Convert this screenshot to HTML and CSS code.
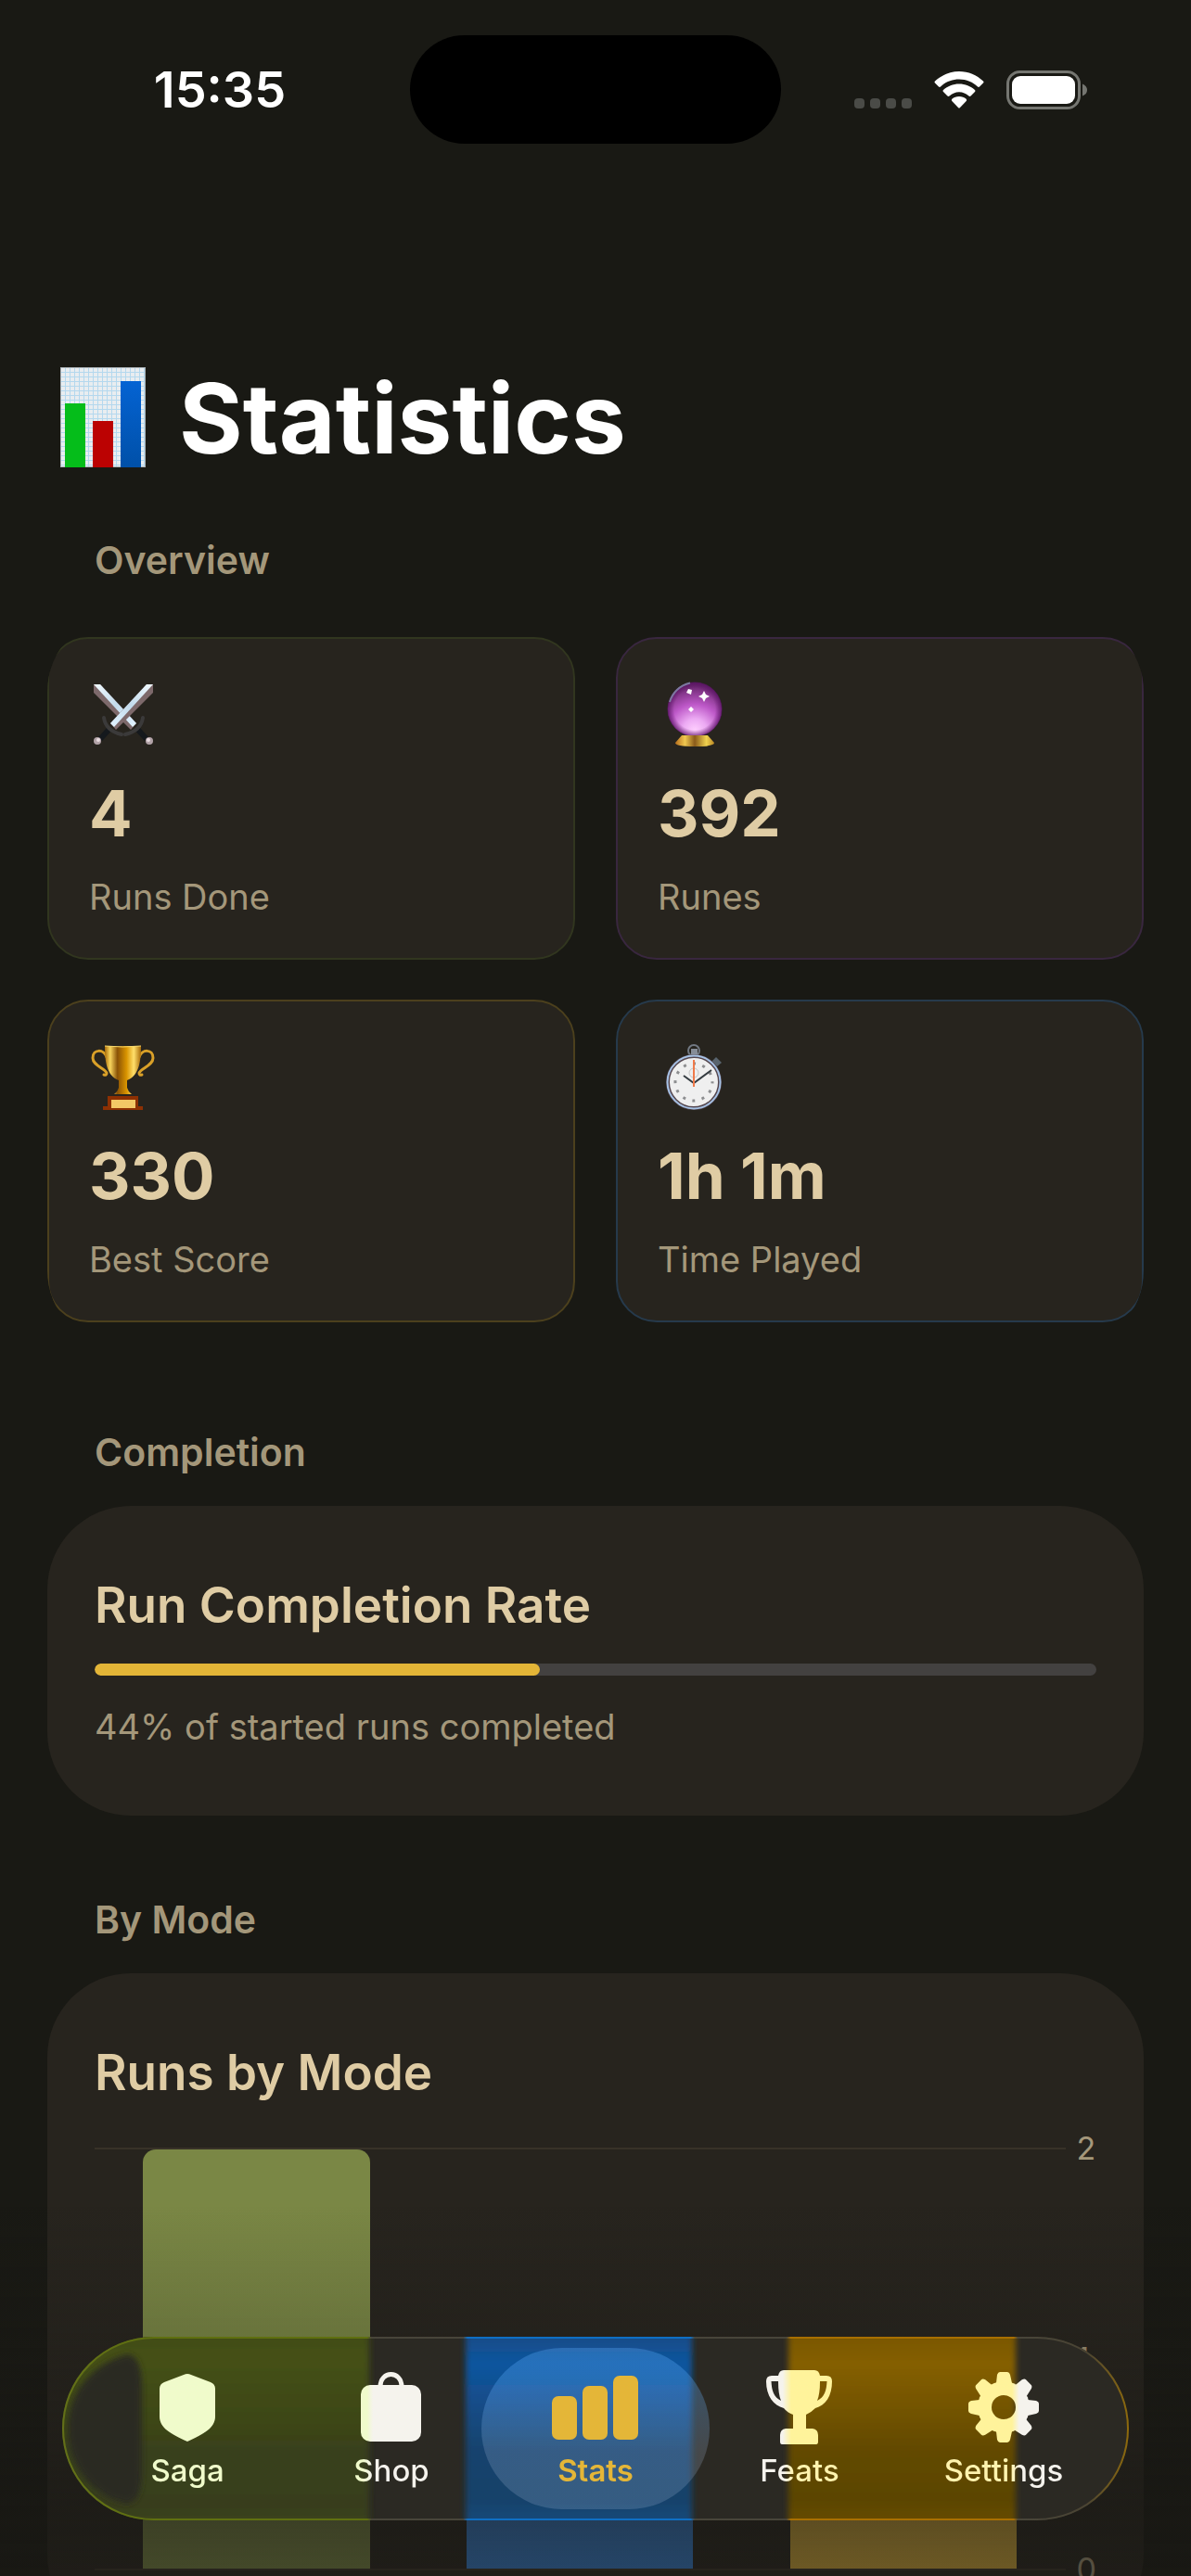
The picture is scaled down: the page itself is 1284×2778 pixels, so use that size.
FILE: index.html
```html
<!DOCTYPE html>
<html lang="en">
<head>
    <meta charset="UTF-8">
    <meta name="viewport" content="width=device-width, initial-scale=1">
    <title>Statistics</title>
    <link rel="stylesheet" href="styles.css">
</head>
<body>
<div class="app">
    <!-- Status bar -->
    <header class="status">
        <time class="status-time">15:35</time>
        <div class="island"></div>
        <div class="status-icons">
            <svg class="signal" viewBox="0 0 62 12" fill="#4a4b47">
                <rect x="0" y="0" width="11" height="11" rx="4"/>
                <rect x="17" y="0" width="11" height="11" rx="4"/>
                <rect x="34" y="0" width="11" height="11" rx="4"/>
                <rect x="51" y="0" width="11" height="11" rx="4"/>
            </svg>
            <svg class="wifi" viewBox="0 0 54 40" fill="#fff">
                <path d="M27 0C17 0 8 4 1 10.500Q0 11.500 1 12.500L5 16.500Q6 17.300 7 16.500C12 11.500 19 8.500 27 8.500S42 11.500 47 16.500Q48 17.300 49 16.500L53 12.500Q54 11.500 53 10.500C46 4 37 0 27 0Z"/>
                <path d="M27 13.500C20.500 13.500 14.500 16 10 20Q9 21 10 22L14.500 26.500Q15.500 27.300 16.500 26.500C19.500 24 23 22.300 27 22.300S34.500 24 37.500 26.500Q38.500 27.300 39.500 26.500L44 22Q45 21 44 20C39.500 16 33.500 13.500 27 13.500Z"/>
                <path d="M27 27C24 27 21.500 28 19.300 29.800Q18.300 31 19.300 32L26 39Q27 40 28 39L34.700 32Q35.700 31 34.700 29.800C32.500 28 30 27 27 27Z"/>
            </svg>
            <svg class="battery" viewBox="0 0 88 42">
                <rect x="1.500" y="1.500" width="77" height="39" rx="13" fill="none" stroke="#757671" stroke-width="3"/>
                <rect x="6" y="6" width="68" height="30" rx="9" fill="#fff"/>
                <path d="M82 14.500Q87 16.500 87 21T82 27.500Z" fill="#757671"/>
            </svg>
        </div>
    </header>

    <main class="content">
        <h1 class="title">
            <svg class="title-icon" viewBox="0 0 92 108">
                <defs>
                    <pattern id="paper" width="5" height="5" patternUnits="userSpaceOnUse">
                        <rect width="5" height="5" fill="#e9edf0"/>
                        <path d="M0 .5H5M.5 0V5" stroke="#b4d8ee" stroke-width="1"/>
                    </pattern>
                    <linearGradient id="blueBar" x1="0" y1="0" x2="0" y2="1">
                        <stop offset="0" stop-color="#0463d3"/><stop offset="1" stop-color="#0050a8"/>
                    </linearGradient>
                </defs>
                <rect width="92" height="108" fill="url(#paper)"/>
                <rect x=".5" y=".5" width="91" height="107" fill="none" stroke="#a9b0b5"/>
                <rect x="5" y="39" width="22" height="69" fill="#05bd1a"/>
                <rect x="35" y="58" width="22" height="50" fill="#bb0202"/>
                <rect x="65" y="15" width="22" height="93" fill="url(#blueBar)"/>
            </svg>
            Statistics
        </h1>

        <h2 class="section-label first">Overview</h2>
        <section class="overview">
            <div class="stat stat-green">
                <svg class="stat-icon" viewBox="0 0 72 72">
                    <defs>
                        <linearGradient id="blade" x1="0" y1="0" x2="1" y2="1">
                            <stop offset="0" stop-color="#f2faff"/><stop offset=".5" stop-color="#c3dbec"/><stop offset="1" stop-color="#e2f3ff"/>
                        </linearGradient>
                    </defs>
                    <g id="sword">
                        <path d="M5 3L12 3L51 45L45 52L5 12Z" fill="#7d696b"/>
                        <path d="M5 3L12 3L51 45L47 49Z" fill="url(#blade)"/>
                        <path d="M51 50L62 62" stroke="#15191d" stroke-width="6"/>
                        <path d="M58 39Q56 53 39 57" fill="none" stroke="#3b3a3a" stroke-width="4" stroke-linecap="round"/>
                        <circle cx="65" cy="64" r="4" fill="#b1a2a7"/>
                        <circle cx="64" cy="63" r="2" fill="#e9dce0"/>
                    </g>
                    <use href="#sword" transform="translate(74 0) scale(-1 1)"/>
                </svg>
                <strong class="stat-value">4</strong>
                <span class="stat-name">Runs Done</span>
            </div>
            <div class="stat stat-purple">
                <svg class="stat-icon" viewBox="0 0 72 72">
                    <defs>
                        <radialGradient id="orb" cx=".5" cy=".9" r=".9">
                            <stop offset="0" stop-color="#ffd0ff"/><stop offset=".25" stop-color="#ecaaf3"/><stop offset=".55" stop-color="#bd58c8"/><stop offset="1" stop-color="#5d1f60"/>
                        </radialGradient>
                        <radialGradient id="orbEdge">
                            <stop offset=".75" stop-color="#5a1265" stop-opacity="0"/><stop offset="1" stop-color="#5a1265" stop-opacity=".8"/>
                        </radialGradient>
                        <linearGradient id="stand">
                            <stop offset="0" stop-color="#b66d1c"/><stop offset=".25" stop-color="#f0c850"/><stop offset=".5" stop-color="#8b5b1a"/><stop offset=".8" stop-color="#f0d24f"/><stop offset="1" stop-color="#b98624"/>
                        </linearGradient>
                    </defs>
                    <circle cx="40" cy="30" r="29" fill="url(#orb)"/>
                    <circle cx="40" cy="30" r="29.500" fill="url(#orbEdge)"/>
                    <path d="M13 22Q18 6 35 1.500" fill="none" stroke="#7c78a0" stroke-width="2"/>
                    <path d="M26 58H54L61 66Q61 70 40 70T19 66Z" fill="url(#stand)"/>
                    <path d="M50 10L52 14L56 16L52 18L50 22L48 18L44 16L48 14ZM33 8L37 9L36 14L31 12ZM36 27L39 30L36 33L33 30Z" fill="#fff"/>
                </svg>
                <strong class="stat-value">392</strong>
                <span class="stat-name">Runes</span>
            </div>
            <div class="stat stat-gold">
                <svg class="stat-icon" viewBox="0 0 72 72">
                    <defs>
                        <linearGradient id="cup">
                            <stop offset="0" stop-color="#a86a08"/><stop offset=".15" stop-color="#f8d55c"/><stop offset=".35" stop-color="#8a5205"/><stop offset=".6" stop-color="#d99400"/><stop offset=".8" stop-color="#ffdf6b"/><stop offset="1" stop-color="#a86a08"/>
                        </linearGradient>
                    </defs>
                    <path d="M19 14C16 5 4 5 4 15C4 23 17 26 19 31Q19 34 16 33M54 14C57 5 69 5 69 15C69 23 56 26 54 31Q54 34 57 33" fill="none" stroke="#d9a028" stroke-width="3" stroke-linecap="round"/>
                    <path d="M17 2H56C56 19 54 34 41 39L41 47Q42 51 46 54H27Q31 51 32 47L32 39C19 34 17 19 17 2Z" fill="url(#cup)"/>
                    <path d="M17 2Q36 4 56 2" stroke="#f8d86c" fill="none"/>
                    <path d="M20 56H53V67H58V71H15V67H20Z" fill="#8d3003"/>
                    <rect x="24" y="60" width="26" height="9" fill="#f3c866"/>
                </svg>
                <strong class="stat-value">330</strong>
                <span class="stat-name">Best Score</span>
            </div>
            <div class="stat stat-blue">
                <svg class="stat-icon" viewBox="0 0 72 72">
                    <circle cx="39" cy="7" r="6" fill="none" stroke="#727983" stroke-width="2"/>
                    <rect x="36" y="5" width="7" height="8" fill="#868d98"/>
                    <path d="M58 19L63 14L69 20L64 24Z" fill="#59646e"/>
                    <circle cx="39" cy="41" r="28" fill="#efefef" stroke="#55474f" stroke-width="4"/>
                    <circle cx="39" cy="41" r="28.500" fill="none" stroke="#a6c2e5" stroke-width="2"/>
                    <circle cx="39" cy="41" r="20" fill="none" stroke="#8d8e90" stroke-width="3" stroke-dasharray="3 7.470" stroke-dashoffset="1.500"/>
                    <circle cx="39" cy="31" r="5" fill="none" stroke="#c6c6c6"/>
                    <path d="M28 34L39 42L58 28" fill="none" stroke="#343b40" stroke-width="2"/>
                    <path d="M39 17V46" stroke="#f07a4a" stroke-width="2"/>
                </svg>
                <strong class="stat-value">1h 1m</strong>
                <span class="stat-name">Time Played</span>
            </div>
        </section>

        <h2 class="section-label">Completion</h2>
        <section class="card">
            <h3 class="card-title"><label for="rate">Run Completion Rate</label></h3>
            <progress class="rate" id="rate" value="4" max="9"></progress>
            <p class="card-note">44% of started runs completed</p>
        </section>

        <h2 class="section-label">By Mode</h2>
        <section class="card">
            <h3 class="card-title">Runs by Mode</h3>
            <div class="chart">
                <div class="plot">
                    <div class="slot"><div class="bar bar-green" style="height: 100%"></div></div>
                    <div class="slot"><div class="bar bar-blue" style="height: 50%"></div></div>
                    <div class="slot"><div class="bar bar-gold" style="height: 50%"></div></div>
                </div>
                <div class="axis"><span>2</span><span>1</span><span>0</span></div>
            </div>
        </section>
    </main>

    <div class="fade"></div>

    <!-- Tab bar -->
    <nav class="tabs">
        <svg class="glass" viewBox="0 0 1150 198" preserveAspectRatio="none">
            <defs>
                <linearGradient id="gGreen" x1="0" y1="0" x2="0" y2="1">
                    <stop offset="0" stop-color="#3f4919"/><stop offset=".18" stop-color="#455117"/><stop offset=".6" stop-color="#39411a"/><stop offset=".85" stop-color="#373e1b"/><stop offset="1" stop-color="#404a18"/>
                </linearGradient>
                <linearGradient id="gBlue" x1="0" y1="0" x2="0" y2="1">
                    <stop offset="0" stop-color="#154a80"/><stop offset=".18" stop-color="#10559f"/><stop offset=".6" stop-color="#17436e"/><stop offset=".85" stop-color="#18426a"/><stop offset="1" stop-color="#144b80"/>
                </linearGradient>
                <linearGradient id="gGold" x1="0" y1="0" x2="0" y2="1">
                    <stop offset="0" stop-color="#765500"/><stop offset=".18" stop-color="#855f00"/><stop offset=".6" stop-color="#634a00"/><stop offset=".85" stop-color="#5b4500"/><stop offset="1" stop-color="#6c4e00"/>
                </linearGradient>
                <linearGradient id="rim" x1="0" x2="1150" y1="0" y2="0" gradientUnits="userSpaceOnUse">
                    <stop offset="0" stop-color="#637018"/><stop offset=".075" stop-color="#5f7010"/><stop offset=".286" stop-color="#5f7010"/>
                    <stop offset=".29" stop-color="#48453a"/><stop offset=".376" stop-color="#48453a"/>
                    <stop offset=".38" stop-color="#0f6fc4"/><stop offset=".589" stop-color="#0f6fc4"/>
                    <stop offset=".593" stop-color="#48453a"/><stop offset=".679" stop-color="#48453a"/>
                    <stop offset=".683" stop-color="#a96f00"/><stop offset=".892" stop-color="#a96f00"/>
                    <stop offset=".896" stop-color="#48453a"/><stop offset=".96" stop-color="#4a4433"/><stop offset="1" stop-color="#8e6a0c"/>
                </linearGradient>
                <filter id="soft" x="-10%" y="-10%" width="120%" height="120%"><feGaussianBlur stdDeviation="3"/></filter>
                <clipPath id="pill"><rect width="1150" height="198" rx="99"/></clipPath>
            </defs>
            <g clip-path="url(#pill)">
                <rect width="1150" height="198" fill="#2b2923"/>
                <rect x="-20" y="-20" width="351" height="238" fill="url(#gGreen)" filter="url(#soft)"/>
                <path d="M70 19Q86 20 86 55V145Q86 178 70 180C35 174 6 140 6 99S35 28 70 19Z" fill="#2b2923" filter="url(#soft)"/>
                <rect x="435" y="-10" width="244" height="218" fill="url(#gBlue)" filter="url(#soft)"/>
                <rect x="783" y="-10" width="245" height="218" fill="url(#gGold)" filter="url(#soft)"/>
            </g>
            <rect x="1" y="1" width="1148" height="196" rx="98" fill="none" stroke="url(#rim)" stroke-width="2"/>
        </svg>
        <a class="tab tab-saga" href="#saga">
            <svg class="tab-icon" viewBox="0 0 100 80" fill="#f0fbcb"><path d="M50 4Q52 4 54 5L75 13Q80 15 80 20V50C80 62 68 69 50 77C32 69 20 62 20 50V20Q20 15 25 13L46 5Q48 4 50 4Z"/></svg>
            <span>Saga</span>
        </a>
        <a class="tab tab-shop" href="#shop">
            <svg class="tab-icon" viewBox="0 0 100 80">
                <defs><linearGradient id="shopTint" x1="17" x2="83" y1="0" y2="0" gradientUnits="userSpaceOnUse"><stop offset=".1" stop-color="#f0fbcb"/><stop offset=".2" stop-color="#f5f3ed"/></linearGradient></defs>
                <rect x="17" y="16" width="65" height="61" rx="10" fill="url(#shopTint)"/>
                <path d="M38 18C38 0 61 0 61 18" fill="none" stroke="#f5f3ed" stroke-width="5"/>
            </svg>
            <span>Shop</span>
        </a>
        <a class="tab tab-active" href="#stats">
            <svg class="tab-icon" viewBox="0 0 100 80" fill="#e4b638">
                <rect x="3" y="28" width="27" height="47" rx="7"/>
                <rect x="36" y="17" width="27" height="58" rx="7"/>
                <rect x="69" y="6" width="27" height="69" rx="7"/>
            </svg>
            <span>Stats</span>
        </a>
        <a class="tab tab-feats" href="#feats">
            <svg class="tab-icon" viewBox="0 0 100 80" fill="url(#featsTint)">
                <defs><linearGradient id="featsTint" x1="12" x2="88" y1="0" y2="0" gradientUnits="userSpaceOnUse"><stop offset=".26" stop-color="#f5f3ed"/><stop offset=".38" stop-color="#fff39b"/></linearGradient></defs>
                <path d="M33 0H66Q71 0 72 6H79Q85 6 85 12C85 28 78 38 67 41Q62 46 57 48V63H64Q70 64 70 70V77Q70 80 68 80H31Q29 80 29 77V70Q29 64 35 63H43V48Q37 46 33 41C22 38 14 28 14 12Q14 6 20 6H27Q28 0 33 0ZM27 12H19.500C20 22 22 29 30 33Q27 26 27 12ZM72 12Q72 26 69 33C77 29 79 22 79.500 12Z"/>
            </svg>
            <span>Feats</span>
        </a>
        <a class="tab tab-settings" href="#settings">
            <svg class="tab-icon" viewBox="0 0 100 80">
                <defs>
                    <linearGradient id="setTint" x1="12" x2="88" y1="0" y2="0" gradientUnits="userSpaceOnUse"><stop offset=".62" stop-color="#fff39b"/><stop offset=".72" stop-color="#f5f3ed"/></linearGradient>
                    <mask id="gear">
                        <g fill="#fff">
                            <circle cx="50" cy="40" r="28"/>
                            <g id="teeth">
                                <path id="tooth" d="M42 14L43 5Q44 2 46 2H54Q56 2 57 5L59 14V20H41ZM42 66L43 75Q44 78 46 78H54Q56 78 57 75L59 66V60H41Z"/>
                                <use href="#tooth" transform="rotate(90 50 40)"/>
                            </g>
                            <use href="#teeth" transform="rotate(45 50 40)"/>
                        </g>
                        <circle cx="50" cy="40" r="13" fill="#000"/>
                    </mask>
                </defs>
                <rect x="10" width="80" height="80" fill="url(#setTint)" mask="url(#gear)"/>
            </svg>
            <span>Settings</span>
        </a>
    </nav>
</div>
</body>
</html>
```
FILE: styles.css
```css
* {
    box-sizing: border-box;
    margin: 0;
    padding: 0;
}

body {
    background: #191914;
    color: #dfcca4;
    font-family: "Inter", "Noto Sans", sans-serif;
}

.app {
    display: flex;
    flex-direction: column;
    height: 100vh;
}

/* Status bar */
.status {
    display: grid;
    grid-template-columns: 1fr 400px 1fr;
    align-items: center;
    justify-items: center;
    padding-top: 38px;
}

.status-time {
    padding-left: 32px;
    font-size: 54px;
    font-weight: 600;
    color: #fff;
}

.island {
    width: 100%;
    height: 117px;
    border-radius: 59px;
    background: #000;
}

.status-icons {
    display: flex;
    align-items: center;
    gap: 24px;
    padding-right: 32px;
}

.signal {
    width: 62px;
    align-self: flex-end;
}

.wifi {
    width: 54px;
}

.battery {
    width: 88px;
}

/* Scrolling content */
.content {
    flex: 1;
    min-height: 0;
    overflow-y: auto;
    scrollbar-width: none;
    padding: 231px 51px 300px;
}

.title {
    display: flex;
    align-items: center;
    gap: 36px;
    height: 128px;
    padding-left: 14px;
    font-size: 105px;
    font-weight: 700;
    color: #fff;
}

.title-icon {
    width: 92px;
}

.section-label {
    margin: 88px 0 34px;
    padding-left: 51px;
    font-size: 41px;
    line-height: 48px;
    font-weight: 600;
    color: #a4977a;
}

.section-label.first {
    margin-top: 66px;
}

/* Overview cards, the outer corners are clipped by the rounded section */
.overview {
    display: grid;
    grid-template-columns: 1fr 1fr;
    gap: 43px 44px;
    padding: 25px 0 28px;
    border-radius: 84px;
    overflow: hidden;
}

.stat {
    display: flex;
    flex-direction: column;
    padding: 46px 43px 43px;
    border: 2px solid;
    border-radius: 44px;
    background: #27241e;
}

.stat-green { border-color: #31361f; }
.stat-purple { border-color: #39273f; }
.stat-gold { border-color: #4c401d; }
.stat-blue { border-color: #263a4c; }

.stat-icon {
    width: 72px;
    height: 72px;
}

.stat-value {
    margin-top: 30px;
    font-size: 69px;
    line-height: 80px;
    font-weight: 700;
}

.stat-name {
    margin-top: 27px;
    font-size: 38px;
    line-height: 46px;
    color: #a4977a;
}

/* Large cards */
.card {
    padding: 75px 51px 73px;
    border-radius: 90px;
    background: #27241e;
}

.card-title {
    font-size: 53px;
    line-height: 64px;
    font-weight: 600;
}

.rate {
    display: block;
    appearance: none;
    width: 100%;
    height: 13px;
    margin: 31px 0 32px;
    border: none;
    border-radius: 7px;
    overflow: hidden;
    background: #434140;
}

.rate::-webkit-progress-bar {
    background: #434140;
}

.rate::-webkit-progress-value {
    border-radius: 7px;
    background: #e3b537;
}

.card-note {
    font-size: 38px;
    line-height: 46px;
    color: #a4977a;
}

/* Bar chart */
.chart {
    display: flex;
    gap: 12px;
    margin-top: 49px;
}

.plot {
    display: flex;
    flex: 1;
    height: 456px;
    border-top: 2px solid #383228;
    border-bottom: 2px solid #383228;
}

.slot {
    display: flex;
    flex: 1;
    align-items: flex-end;
    justify-content: center;
}

.bar {
    width: 70%;
    border-radius: 14px 14px 0 0;
}

.bar-green { background: #7a8745; }
.bar-blue { background: #357ed1; }
.bar-gold { background: #d5ab3a; }

.axis {
    display: flex;
    flex-direction: column;
    justify-content: space-between;
    margin: -19px 0;
    font-size: 34px;
    line-height: 40px;
    color: #a4977a;
}

/* Content fades out behind the tab bar */
.fade {
    position: fixed;
    left: 0;
    right: 0;
    bottom: 0;
    height: 400px;
    background: linear-gradient(rgba(25, 24, 20, 0), rgba(25, 24, 20, 0.17) 35%, rgba(25, 24, 20, 0.64) 85%, rgba(25, 24, 20, 0.55));
    pointer-events: none;
}

/* Tab bar */
.tabs {
    position: fixed;
    left: 67px;
    right: 67px;
    bottom: 60px;
    display: flex;
    padding: 12px 25px;
    border-radius: 99px;
}

.glass {
    position: absolute;
    left: 0;
    top: 0;
    width: 100%;
    height: 100%;
}

.tab {
    position: relative;
    display: flex;
    flex: 1;
    flex-direction: column;
    align-items: center;
    gap: 8px;
    height: 174px;
    padding-top: 24px;
    color: #f5f3ed;
    font-size: 33px;
    line-height: 40px;
    font-weight: 500;
    text-decoration: none;
}

.tab-icon {
    width: 100px;
    height: 80px;
}

.tab-active {
    margin: 0 -13px;
    flex: 0 0 246px;
    border-radius: 99px;
    background: linear-gradient(rgba(90, 170, 250, 0.32) 20%, rgba(165, 185, 215, 0.22) 65%);
    color: #e4b638;
    font-weight: 600;
}

.tab-saga {
    color: #f0fbcb;
}

/* Labels pick up the colour of the bars behind the glass */
.tab-shop span,
.tab-feats span,
.tab-settings span {
    background-clip: text;
    -webkit-background-clip: text;
    color: transparent;
}

.tab-shop span {
    background-image: linear-gradient(90deg, #f0fbcb 10px, #f5f3ed 20px);
}

.tab-feats span {
    background-image: linear-gradient(90deg, #f5f3ed 26px, #fff3ae 36px);
}

.tab-settings span {
    background-image: linear-gradient(90deg, #fff3ae 72px, #f5f3ed 82px);
}
```
